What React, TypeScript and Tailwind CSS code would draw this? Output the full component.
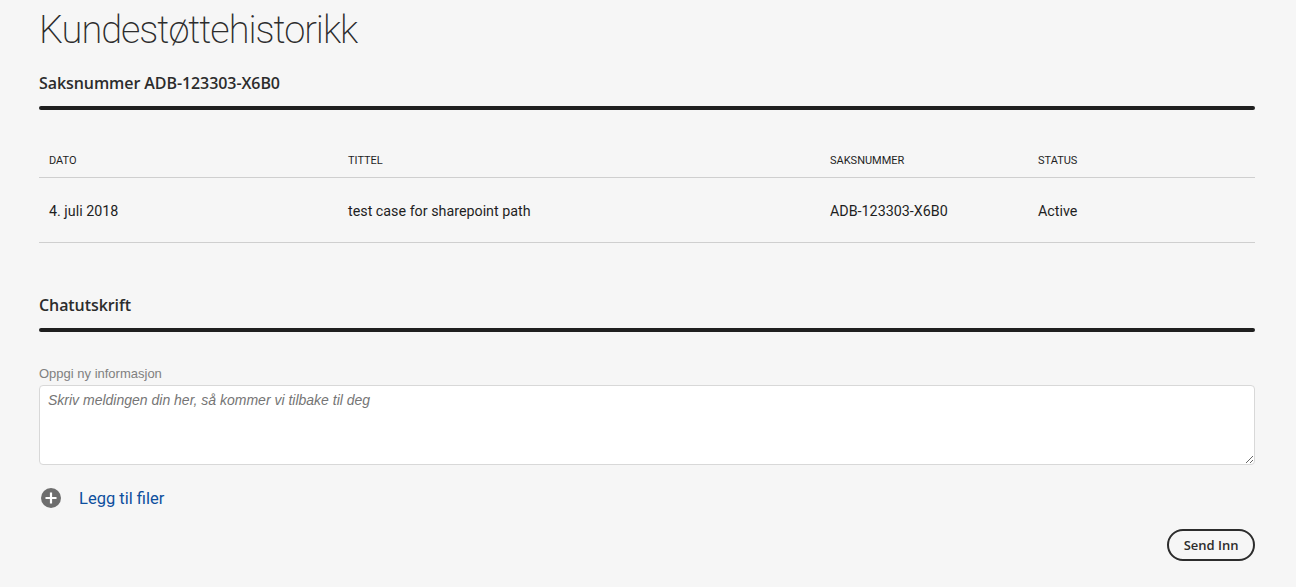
import React from 'react';

const SectionHead: React.FC<{ title: string }> = ({ title }) => (
  <div>
    <h2 className="text-[16px] leading-[22px] font-semibold tracking-[-0.08px] text-[#2c2c2c]">{title}</h2>
    <div className="mt-[12px] h-1 rounded-full bg-[#1f1f1f]" />
  </div>
);

export default function App() {
  return (
    <div className="h-[587px] overflow-hidden bg-[#f6f6f6] pl-[39px] pr-[41px] font-['Open_Sans',sans-serif] text-[#2c2c2c]">
      <h1 className="pt-[4px] font-['Roboto',sans-serif] text-[38px] leading-[52px] font-extralight tracking-[-1.05px] text-[#2c2c2c]">Kundestøttehistorikk</h1>

      <div className="mt-[16px]">
        <SectionHead title="Saksnummer ADB-123303-X6B0" />
      </div>

      {/* case table */}
      <div className="mt-[44px] grid grid-cols-[309px_482px_208px_1fr] border-b border-[#cfcfcf] font-['Roboto',sans-serif]">
        <div className="col-span-4 grid grid-cols-subgrid border-b border-[#cfcfcf] pb-[9px] pl-[10px] text-[11px] leading-[14px] text-[#1f1f1f]">
          <span>DATO</span>
          <span>TITTEL</span>
          <span>SAKSNUMMER</span>
          <span>STATUS</span>
        </div>
        <div className="col-span-4 grid grid-cols-subgrid pt-[24px] pb-[22px] pl-[10px] text-[14.3px] leading-[18px] text-[#1f1f1f]">
          <span>4. juli 2018</span>
          <span>test case for sharepoint path</span>
          <span>ADB-123303-X6B0</span>
          <span>Active</span>
        </div>
      </div>

      <div className="mt-[51px]">
        <SectionHead title="Chatutskrift" />
      </div>

      <label className="mt-[32px] block font-['Liberation_Sans',sans-serif] text-[13px] leading-[20px] text-[#808080]">Oppgi ny informasjon</label>
      <textarea
        className="mt-[1px] block h-[80px] w-full rounded-[4px] border border-[#d8d8d8] bg-white px-[8px] py-[5px] font-['Liberation_Sans',sans-serif] text-[14px] leading-[18px] outline-none placeholder:text-[#757575] placeholder:italic"
        placeholder="Skriv meldingen din her, så kommer vi tilbake til deg"
      />

      <div className="mt-[21px] flex items-center gap-[18px] pl-[2px]">
        <svg width="20" height="20" viewBox="0 0 20 20" aria-hidden="true">
          <circle cx="10" cy="10" r="10" fill="#6e6e6e" />
          <path d="M10 4.5v11M4.5 10h11" stroke="#fff" strokeWidth="2.2" />
        </svg>
        <a href="#" className="pt-px font-['Roboto',sans-serif] text-[16.5px] leading-[23px] text-[#0d4f9e]">Legg til filer</a>
      </div>

      <div className="mt-[19px] flex justify-end">
        <button className="h-8 rounded-full border-2 border-[#2c2c2c] px-[14.5px] text-[13px] font-semibold leading-none text-[#2c2c2c]">Send Inn</button>
      </div>
    </div>
  );
}
